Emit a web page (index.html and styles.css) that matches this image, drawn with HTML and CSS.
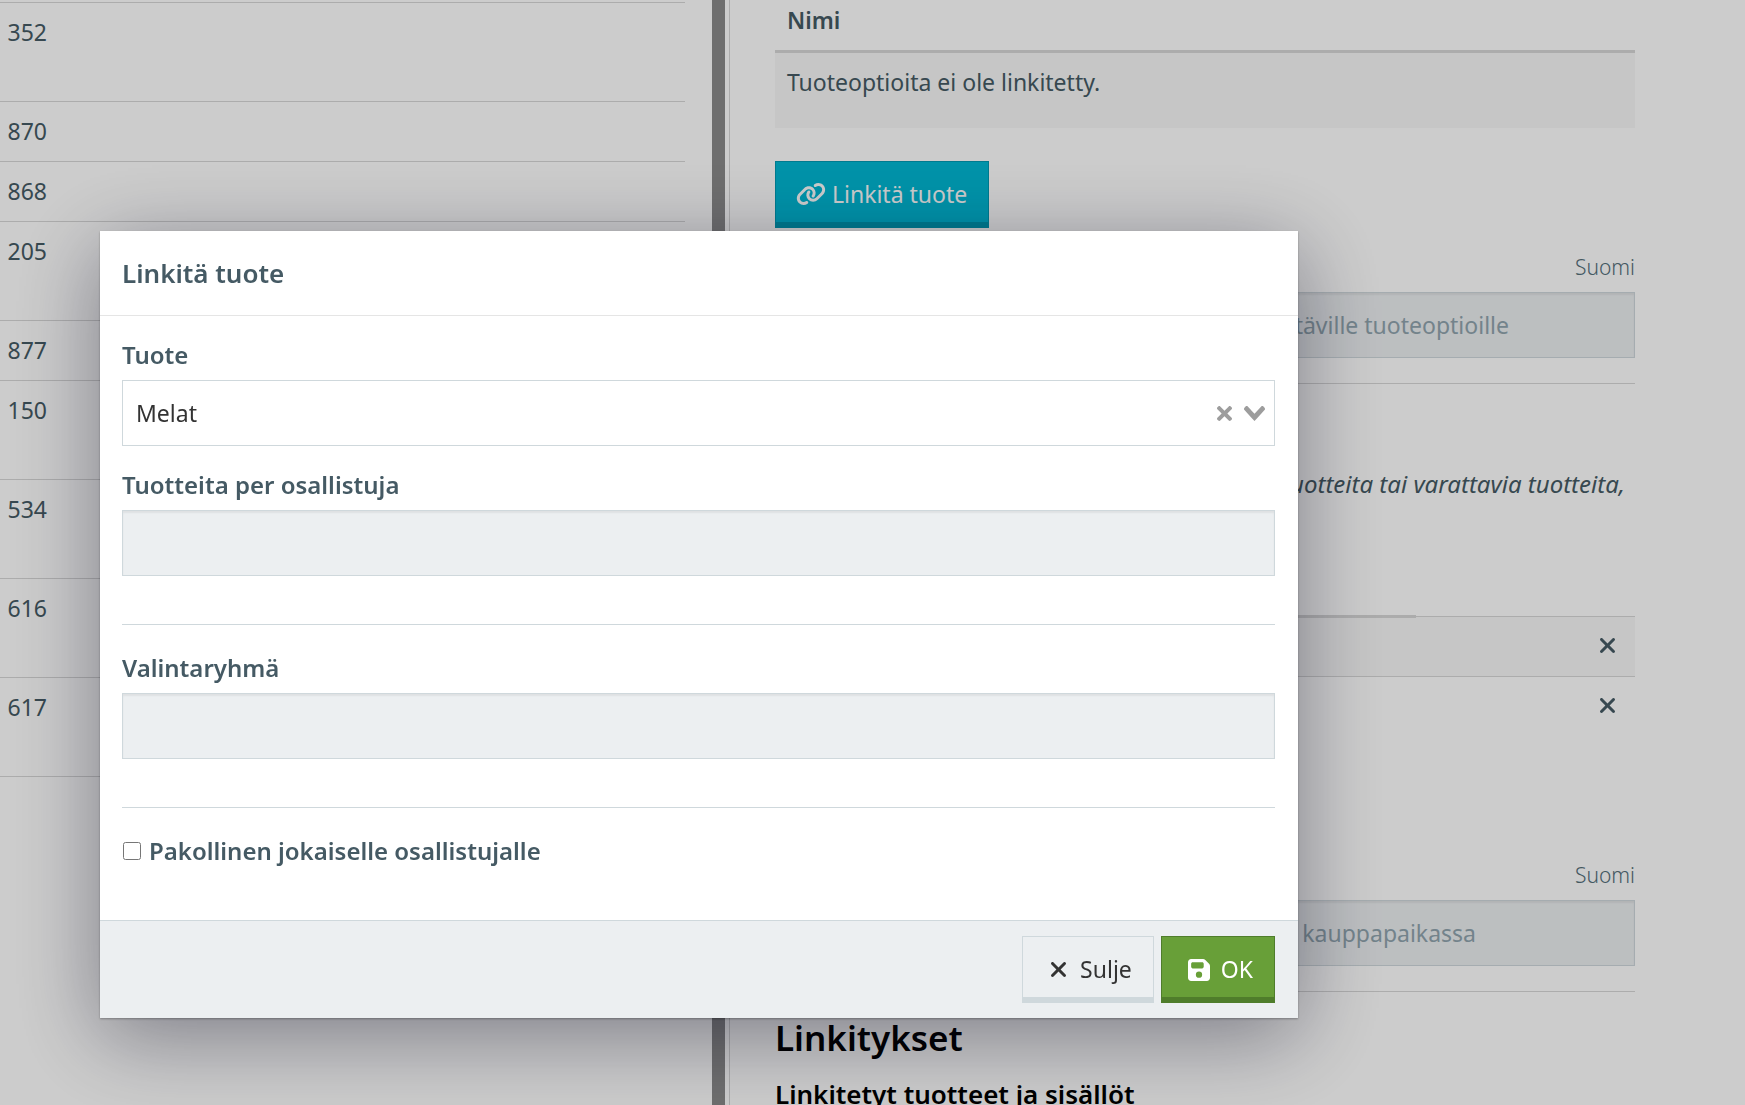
FILE: index.html
```html
<!DOCTYPE html>
<html lang="fi">
<head>
    <meta charset="UTF-8">
    <meta name="viewport" content="width=device-width, initial-scale=1.0">
    <title>Linkitä tuote</title>
    <link rel="stylesheet" href="styles.css">
</head>
<body>

<svg class="sprite" aria-hidden="true">
    <symbol id="icon-times" viewBox="32 96 320 320"><path d="M342.6 150.6c12.5-12.5 12.5-32.8 0-45.3s-32.8-12.5-45.3 0L192 210.7 86.6 105.4c-12.5-12.5-32.8-12.5-45.3 0s-12.5 32.8 0 45.3L146.7 256 41.4 361.4c-12.5 12.5-12.5 32.8 0 45.3s32.8 12.5 45.3 0L192 301.3 297.4 406.6c12.5 12.5 32.8 12.5 45.3 0s12.5-32.8 0-45.3L237.3 256 342.6 150.6z"/></symbol>
    <symbol id="icon-link" viewBox="0 0 640 512"><path d="M579.8 267.7c56.5-56.5 56.5-148 0-204.5c-50-50-128.8-56.5-186.3-15.4l-1.6 1.1c-14.4 10.3-17.7 30.3-7.4 44.6s30.3 17.7 44.6 7.4l1.6-1.1c32.1-22.9 76-19.3 103.8 8.6c31.5 31.5 31.5 82.5 0 114L422.3 334.8c-31.5 31.5-82.5 31.5-114 0c-27.9-27.9-31.5-71.8-8.6-103.8l1.1-1.6c10.3-14.4 6.9-34.4-7.4-44.6s-34.4-6.9-44.6 7.4l-1.1 1.6C206.5 251.2 213 330 263 380c56.5 56.5 148 56.5 204.5 0L579.8 267.7zM60.2 244.3c-56.5 56.5-56.5 148 0 204.5c50 50 128.8 56.5 186.3 15.4l1.6-1.1c14.4-10.3 17.7-30.3 7.4-44.6s-30.3-17.7-44.6-7.4l-1.6 1.1c-32.1 22.9-76 19.3-103.8-8.6C74 372 74 321 105.5 289.5L217.7 177.2c31.5-31.5 82.5-31.5 114 0c27.9 27.9 31.5 71.8 8.6 103.9l-1.1 1.6c-10.3 14.4-6.9 34.4 7.4 44.6s34.4 6.9 44.6-7.4l1.1-1.6C433.5 260.8 427 182 377 132c-56.5-56.5-148-56.5-204.5 0L60.2 244.3z"/></symbol>
    <symbol id="icon-save" viewBox="0 32 448 448"><path d="M64 32C28.7 32 0 60.7 0 96V416c0 35.3 28.7 64 64 64H384c35.3 0 64-28.7 64-64V173.3c0-17-6.7-33.3-18.7-45.3L352 50.7C340 38.7 323.7 32 306.7 32H64zm0 96c0-17.7 14.3-32 32-32H288c17.7 0 32 14.3 32 32v64c0 17.7-14.3 32-32 32H96c-17.7 0-32-14.3-32-32V128zM224 288a64 64 0 1 1 0 128 64 64 0 1 1 0-128z"/></symbol>
</svg>

<div class="page">
    <div class="list-pane">
        <table class="list">
            <tr class="tall"><td>352</td><td></td></tr>
            <tr><td>870</td><td></td></tr>
            <tr><td>868</td><td></td></tr>
            <tr class="tall"><td>205</td><td></td></tr>
            <tr><td>877</td><td></td></tr>
            <tr class="tall"><td>150</td><td></td></tr>
            <tr class="tall"><td>534</td><td></td></tr>
            <tr class="tall"><td>616</td><td></td></tr>
            <tr class="tall"><td>617</td><td></td></tr>
        </table>
    </div>
    <div class="splitter"></div>
    <main class="detail">
        <table class="options">
            <thead><tr><th>Nimi</th></tr></thead>
            <tbody><tr><td>Tuoteoptioita ei ole linkitetty.</td></tr></tbody>
        </table>
        <button type="button" class="btn btn-info"><svg class="icon-link"><use href="#icon-link"/></svg>Linkitä tuote</button>

        <div class="field">
            <label for="options-title">Suomi</label>
            <input type="text" id="options-title" class="input title-input" placeholder="linkitettäville tuoteoptioille">
        </div>
        <hr>
        <p class="help">tuotteita tai varattavia tuotteita,</p>

        <table class="products">
            <tr><td class="name"></td><td class="remove"><button type="button" aria-label="Poista"><svg class="icon-times"><use href="#icon-times"/></svg></button></td></tr>
            <tr><td class="name"></td><td class="remove"><button type="button" aria-label="Poista"><svg class="icon-times"><use href="#icon-times"/></svg></button></td></tr>
        </table>

        <div class="field">
            <label for="shop-title">Suomi</label>
            <input type="text" id="shop-title" class="input shop-input" placeholder="kauppapaikassa">
        </div>
        <hr>
        <h2>Linkitykset</h2>
        <h3>Linkitetyt tuotteet ja sisällöt</h3>
    </main>
</div>

<div class="overlay">
    <form class="modal" role="dialog" aria-labelledby="modal-title">
        <header class="modal-header">
            <h4 id="modal-title">Linkitä tuote</h4>
        </header>
        <div class="modal-body">
            <label for="product">Tuote</label>
            <div class="select">
                <select id="product">
                    <option>Melat</option>
                </select>
                <button type="button" aria-label="Tyhjennä"><svg width="15" height="15" viewBox="0 0 10 10"><path d="M6.9 5l2.84-2.84c.35-.35.35-.92 0-1.27L9.1.26c-.35-.35-.91-.35-1.26 0L5 3.1 2.16.26C1.8-.09 1.24-.09.89.26L.26.89c-.35.35-.35.92 0 1.27L3.1 5 .26 7.84c-.35.35-.35.92 0 1.27l.63.63c.35.35.92.35 1.27 0L5 6.9l2.84 2.84c.35.35.92.35 1.27 0l.63-.63c.35-.35.35-.92 0-1.27z"/></svg></button>
                <svg width="21" height="15" viewBox="0 0 14 10"><path d="M9.2 7.6l4.5-4.87c.4-.44.4-1.16 0-1.6l-.74-.8c-.4-.44-1.07-.44-1.48 0L7 5.2 2.52.33c-.41-.44-1.07-.44-1.48 0l-.74.8c-.4.44-.4 1.16 0 1.6L4.8 7.6 7 10z"/></svg>
            </div>
            <label for="per-person">Tuotteita per osallistuja</label>
            <input type="text" id="per-person" class="input">
            <hr>
            <label for="group">Valintaryhmä</label>
            <input type="text" id="group" class="input">
            <hr>
            <label class="check"><input type="checkbox">Pakollinen jokaiselle osallistujalle</label>
        </div>
        <footer class="modal-footer">
            <button type="button" class="btn btn-default"><svg class="icon-times"><use href="#icon-times"/></svg>Sulje</button>
            <button type="button" class="btn btn-success"><svg class="icon-save"><use href="#icon-save"/></svg>OK</button>
        </footer>
    </form>
</div>

</body>
</html>
```
FILE: styles.css
```css
* {
    box-sizing: border-box;
}
body {
    margin: 0;
    font-family: "Noto Sans", "Open Sans", sans-serif;
    font-size: 23px;
    line-height: 39px;
    color: #455a64;
    background: #fff;
}
button, input, select {
    font: inherit;
    color: inherit;
}
svg {
    fill: currentColor;
    flex: none;
}
table {
    width: 100%;
    border-collapse: collapse;
}
hr {
    margin: 0;
    border: 0;
    border-top: 1px solid #cfd8dc;
}
.sprite {
    display: none;
}
.icon-times {
    width: 15px;
    height: 15px;
}
.icon-link {
    width: 30px;
    height: 24px;
}
.icon-save {
    width: 22px;
    height: 22px;
}

/* page behind the dialog */
.page {
    display: flex;
    height: 100vh;
    overflow: hidden;
}
.list-pane {
    width: 40.8%;
    padding: 2px 27px 0 0;
}
.list tr {
    height: 60px;
    border-top: 1px solid #d7d7d7;
    border-bottom: 1px solid #d7d7d7;
}
.list .tall {
    height: 99px;
}
.list td {
    padding: 10px 0;
    vertical-align: top;
}
.list td:first-child {
    width: 47px;
    text-align: right;
}
.splitter {
    width: 13px;
    background: #8a8a8a;
}
.detail {
    flex: 1;
    margin-left: 4px;
    padding: 1px 110px 0 45px;
    border-left: 1px solid #d7d7d7;
}
.options {
    margin-bottom: 33px;
}
.options th {
    padding: 0 12px 10px;
    border-bottom: 3px solid #d7d7d7;
    text-align: left;
    font-weight: 600;
}
.options td {
    height: 76px;
    padding: 10px 12px;
    background: #f8f8f8;
    vertical-align: top;
}
.btn {
    display: inline-flex;
    align-items: center;
    height: 67px;
    border: 1px solid;
}
.btn-info {
    gap: 6px;
    padding: 0 21px 0 20px;
    color: #fff;
    background: #00b8d4;
    border-color: #009ab3;
    box-shadow: inset 0 -5px #009ab3;
}
.field {
    margin-top: 20px;
    display: flex;
    flex-direction: column;
}
.field label {
    padding-bottom: 6px;
    font-size: 21px;
    font-weight: 300;
    line-height: 38px;
    text-align: right;
    color: #546e7a;
}
.input {
    display: block;
    width: 100%;
    height: 66px;
    padding: 0 13px;
    border: 1px solid #cfd8dc;
    background: #eceff1;
    box-shadow: inset 0 2px 2px rgba(0, 0, 0, .06);
}
.input::placeholder {
    color: #90a4ae;
    opacity: 1;
}
.title-input {
    padding-right: 125px;
    text-align: right;
}
.shop-input {
    padding-right: 158px;
    text-align: right;
}
.detail hr {
    margin-top: 25px;
    border-color: #d7d7d7;
}
.help {
    margin: 80px 10px 0 0;
    font-size: 24px;
    font-style: italic;
    text-align: right;
}
.products {
    margin: 112px 0 120px;
}
.products tr {
    height: 60px;
    border-top: 1px solid #d7d7d7;
}
.products tr:first-child {
    background: #f8f8f8;
}
.products td {
    padding: 0 0 3px;
}
.products .name {
    width: 641px;
}
.products tr:first-child .name {
    border-top: 3px solid #d7d7d7;
}
.products .remove {
    padding-right: 20px;
    text-align: right;
}
.remove button {
    display: inline-flex;
    padding: 0;
    border: 0;
    background: none;
}
.detail h2 {
    margin: 20px 0 14px;
    font-size: 35px;
    font-weight: 600;
    line-height: 52px;
    color: #000;
}
.detail h3 {
    margin: 0;
    font-size: 26px;
    font-weight: 600;
    line-height: 32px;
    color: #000;
}

/* dialog */
.overlay {
    position: fixed;
    inset: 0;
    padding: 231px 447px 0 100px;
    background: rgba(0, 0, 0, .2);
}
.modal {
    background: #fff;
    box-shadow: 0 1px 2px rgba(0, 0, 0, .3), 0 18px 80px rgba(8, 8, 30, .4);
}
.modal-header {
    padding: 22px;
    border-bottom: 1px solid #e5e5e5;
}
.modal-header h4 {
    margin: 0;
    font-size: 26px;
    font-weight: 600;
    line-height: 40px;
}
.modal-body {
    padding: 19px 23px 50px 22px;
}
.modal-body label {
    display: block;
    padding-bottom: 6px;
    font-size: 24px;
    font-weight: 600;
}
.select {
    display: flex;
    align-items: center;
    height: 66px;
    margin-bottom: 19px;
    padding-right: 9px;
    border: 1px solid #cfd8dc;
    color: #9d9d9d;
}
.select select {
    flex: 1;
    align-self: stretch;
    padding: 0 13px;
    border: 0;
    background: none;
    appearance: none;
    color: #333;
}
.select button {
    display: flex;
    margin-right: 12px;
    padding: 0;
    border: 0;
    background: none;
    color: inherit;
}
.modal-body hr {
    margin: 48px 0 23px;
}
.modal-body .check {
    display: flex;
    align-items: center;
    gap: 8px;
    padding: 0;
}
.check input {
    width: 18px;
    height: 18px;
    margin: 0 0 0 1px;
}
.modal-footer {
    display: flex;
    justify-content: flex-end;
    gap: 7px;
    padding: 15px 23px 15px 22px;
    border-top: 1px solid #cfd8dc;
    background: #eceff1;
}
.btn-default {
    gap: 14px;
    padding: 0 21px 0 28px;
    color: #333;
    background: #eceff1;
    border-color: #cfd8dc;
    box-shadow: inset 0 -5px #cfd8dc;
}
.btn-success {
    gap: 11px;
    padding: 0 21px 0 26px;
    color: #fff;
    background: #689f38;
    border-color: #4f7d2b;
    box-shadow: inset 0 -5px #4f7d2b;
}
```
